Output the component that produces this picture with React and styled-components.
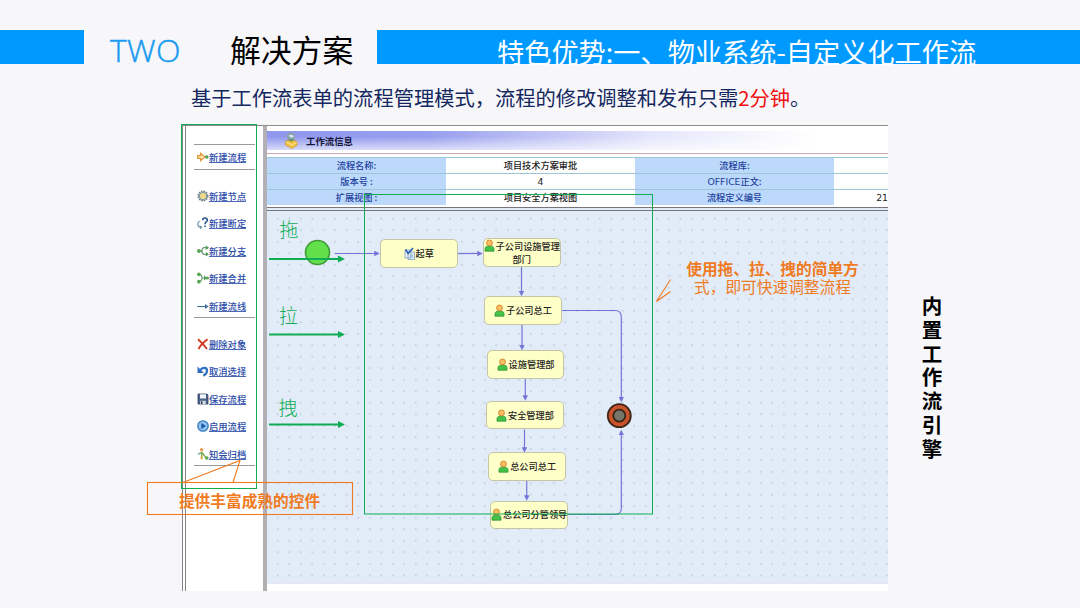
import React from "react";
import styled, { createGlobalStyle, css } from "styled-components";

const Global = createGlobalStyle`
  * { box-sizing: border-box; }
  body { margin: 0; background: #f7f7fa; font-family: "Noto Sans CJK SC", sans-serif; }
`;

const GREEN = "#0fae55";
const ORANGE = "#f07a1e";
const EDGE = "#7276d6";

const Slide = styled.main`
  position: relative;
  width: 1080px;
  height: 608px;
  overflow: hidden;
  background: #f7f7fa;
  display: flex;
  flex-direction: column;
`;

const Header = styled.header`
  display: flex;
  height: 34px;
  margin-top: 30px;
`;

const Bar = styled.div`
  width: ${(p) => p.$w}px;
  background: #0099ff;
  display: flex;
  align-items: center;
`;

const Titles = styled.div`
  width: 293px;
  display: flex;
  align-items: center;
  padding-left: 26px;
  line-height: 44px;
  white-space: nowrap;
`;

const Ordinal = styled.span`
  width: 120px;
  font: 300 32px/44px "Open Sans", sans-serif;
  letter-spacing: 0.3px;
  -webkit-text-stroke: 0.5px #1b9cf2;
  color: #1b9cf2;
  padding-top: 5px;
`;

const Title = styled.h1`
  margin: 0;
  padding-top: 4px;
  font-size: 30.8px;
  font-weight: 400;
  line-height: 44px;
  color: #000;
`;

const Feature = styled.h2`
  margin: 0 0 0 120px;
  padding-top: 8px;
  font-size: 27.2px;
  font-weight: 400;
  line-height: 40px;
  color: #fff;
  white-space: nowrap;
`;

const Lead = styled.p`
  margin: 17px 0 0 191px;
  font-size: 20.27px;
  font-weight: 400;
  line-height: 32px;
  height: 32px;
  color: #14285f;
  white-space: nowrap;
  em { font-style: normal; color: #f01010; }
`;

const Designer = styled.section`
  display: flex;
  width: 706px;
  height: 466px;
  margin: 12px 0 0 182px;
  border-top: 1px solid #8d8a8c;
`;

const Toolbar = styled.nav`
  width: 81px;
  padding: 18px 8px 0 8px;
  background: #fff;
  border-left: 4px double #858587;
`;

const Group = styled.div`
  display: flex;
  flex-direction: column;
  gap: 5.5px;
  padding-top: ${(p) => p.$top}px;
  border-bottom: 1px solid #9b9b9b;
  ${(p) => p.$first && css`border-top: 1px solid #9b9b9b; padding-bottom: 1px;`}
  width: 61px;
`;

const Tool = styled.a`
  display: flex;
  align-items: center;
  height: 22px;
  padding-left: 3px;
  font-size: 9.3px;
  font-weight: 500;
  line-height: 12px;
  color: #2b4ba8;
  white-space: nowrap;
  svg { width: 12px; height: 12px; flex: none; }
  span { border-bottom: 1px solid #4a66b4; height: 12px; }
`;

const Workspace = styled.div`
  flex: 1;
  display: flex;
  flex-direction: column;
  border-left: 4px solid #b3b0b3;
  background: #fff;
  min-width: 0;
`;

const InfoHead = styled.div`
  display: flex;
  align-items: center;
  height: 19px;
  margin-top: 5px;
  padding-left: 16px;
  gap: 6px;
  background: linear-gradient(to bottom, rgba(255,255,255,0) 30%, rgba(255,255,255,.65)),
    linear-gradient(to right, #8f98ee 0, #989fee 26%, #bfc3f5 44%, #e6e6fc 62%, #fff 88%);
  font-size: 9.4px;
  font-weight: 700;
  color: #14143a;
  svg { width: 17px; height: 17px; }
`;

const InfoTable = styled.div`
  display: grid;
  grid-template-columns: 179px 189px 199px 54px;
  grid-auto-rows: 16px;
  margin-top: 3px;
  padding-top: 3px;
  border-top: 1px solid #c9a9b4;
`;

const Cell = styled.div`
  display: flex;
  align-items: center;
  justify-content: ${(p) => (p.$end ? "flex-end" : "center")};
  border-top: 1px solid #9cc6d6;
  padding-bottom: 1px;
  background: ${(p) => (p.$label ? "#bcd9fc" : "#fff")};
  color: ${(p) => (p.$label ? "#1c3f9c" : "#222")};
  font-size: 9.2px;
  font-weight: 500;
  line-height: 13px;
  white-space: nowrap;
`;

const Latin = styled.span`
  font-family: "DejaVu Sans", sans-serif;
  font-size: 9.3px;
  font-weight: 400;
`;

const Canvas = styled.div`
  position: relative;
  height: 377px;
  margin-top: 2px;
  border-top: 4px double #77757a;
  border-bottom: 1px solid #e6e6ee;
  background-color: #e2ebf8;
  background-image: radial-gradient(circle, #c3cedc 0.6px, transparent 1px);
  background-size: 11.5px 11.5px;
  background-position: 5px 2px;
`;

const Wires = styled.svg`
  position: absolute;
  left: 0;
  top: 0;
  width: 621px;
  height: 372px;
`;

const Node = styled.div`
  position: absolute;
  left: ${(p) => p.$x - 267}px;
  top: ${(p) => p.$y - 211}px;
  width: 77.5px;
  height: 28.7px;
  display: flex;
  align-items: center;
  justify-content: center;
  text-align: center;
  border: 1px solid #c4c4a6;
  border-radius: 5px;
  background: #ffffc8;
  font-size: 9.2px;
  font-weight: 500;
  line-height: 13px;
  color: #222;
  white-space: nowrap;
  svg { width: 11px; height: 13px; flex: none; margin-right: 1px; vertical-align: -2px; }
`;

const Overlay = styled.svg`
  position: absolute;
  inset: 0;
  width: 1080px;
  height: 608px;
`;

const Gesture = styled.span`
  position: absolute;
  left: ${(p) => p.$x}px;
  top: ${(p) => p.$y}px;
  font-size: 19px;
  font-weight: 300;
  line-height: 24px;
  color: ${GREEN};
`;

const Callout = styled.div`
  position: absolute;
  left: ${(p) => p.$x}px;
  top: ${(p) => p.$y}px;
  width: ${(p) => p.$w}px;
  text-align: center;
  font-size: 15.7px;
  line-height: 18.4px;
  font-weight: 400;
  color: ${ORANGE};
  white-space: nowrap;
  strong { font-weight: 700; display: block; }
`;

const Engine = styled.aside`
  position: absolute;
  left: 920px;
  top: 296px;
  writing-mode: vertical-rl;
  font-size: 20.5px;
  font-weight: 700;
  line-height: 24px;
  letter-spacing: 3.3px;
  white-space: nowrap;
  color: #000;
`;

const Person = () => (
  <svg viewBox="0 0 11 13">
    <path d="M1 12.2V9.6C1 7.8 2.8 7 5.5 7S10 7.8 10 9.6v2.6z" fill="#45c348" stroke="#218b2c" strokeWidth=".7" />
    <circle cx="5.5" cy="3.9" r="2.9" fill="#f9bf62" stroke="#d3812a" strokeWidth=".9" />
  </svg>
);

const Draft = () => (
  <svg viewBox="0 0 11 13">
    <path d="M1 3h6v8H1zM4 5h6.5v7.5H4z" fill="#e8f1fb" stroke="#7da0c4" strokeWidth=".8" />
    <path d="M5.5 8h4M5.5 10h4" stroke="#7da0c4" strokeWidth=".7" />
    <path d="M1.5 2.500l2.600 4L9 1" fill="none" stroke="#2f62b5" strokeWidth="1.6" />
  </svg>
);

const InfoIcon = () => (
  <svg viewBox="0 0 17 17">
    <path d="M2.500 9.500l4.500-2 7 2v3.500l-5 3.500-6.500-3.500z" fill="#f2c244" stroke="#c8912b" strokeWidth=".7" />
    <path d="M3 10l6 3 5-3" fill="none" stroke="#fbe7a0" />
    <circle cx="8" cy="4.800" r="4" fill="#8aa3a6" />
    <path d="M5.5 3.4l3.5-1 2 2.3-3 1z" fill="#d5e6f3" />
    <path d="M5 7.5l3 2.5 3.5-2.5" fill="#678b58" />
  </svg>
);

const toolIcons = {
  flow: (
    <>
      <path d="M.7 4.6h3V2.4L7.8 6 3.7 9.6V7.4h-3z" fill="#fff0c5" stroke="#e09330" strokeWidth="1.200" />
      <circle cx="9.8" cy="6" r="1.8" fill="#4f9f4c" />
    </>
  ),
  node: (
    <>
      <circle cx="6" cy="6" r="4.600" fill="none" stroke="#6d7f85" strokeWidth="1.800" strokeDasharray="1.6 .8" />
      <circle cx="6" cy="6" r="3.7" fill="#f1d98a" stroke="#7b98a8" strokeWidth="1" />
    </>
  ),
  decide: (
    <>
      <path d="M3.2 4.2C1 4.5.5 6 .9 7.8c.3 1.7 1.4 2.4 3.5 2.5M3 8.9l1.6 1.4L3 11.6" fill="none" stroke="#6d8f9f" strokeWidth="1.100" />
      <path d="M5.6 3.2C5.8.3 10.6.4 10.3 3.3 10.1 4.9 8 5 8 7.2M8 8.6v1.5" fill="none" stroke="#27588e" strokeWidth="1.600" />
    </>
  ),
  branch: (
    <>
      <path d="M3 6h2M11 2.700H6.500L5 4.500v3l1.500 1.800H11" fill="none" stroke="#6c9a78" strokeWidth="1.300" />
      <circle cx="1.900" cy="6" r="1.900" fill="#58a653" />
      <path d="M8.800.4l3.200 2.300-3.200 2.300zM8.800 7l3.200 2.300-3.200 2.300z" fill="#4d9a52" />
    </>
  ),
  merge: (
    <>
      <path d="M2 2.5c2.3 0 3 1 3 3.5s-.7 3.5-3 3.5M5.500 6h5" fill="none" stroke="#6c9a78" strokeWidth="1.200" />
      <circle cx="1.900" cy="2.300" r="1.900" fill="#58a653" />
      <circle cx="1.900" cy="9.700" r="1.900" fill="#58a653" />
      <path d="M7 3.500L10 6 7 8.500z" fill="#4d9a52" />
      <circle cx="10.400" cy="6" r="1.600" fill="#58a653" />
    </>
  ),
  line: (
    <>
      <path d="M.3 6.500h9" stroke="#3f6f9f" strokeWidth="1.100" />
      <path d="M8 4l3.600 2.500L8 9z" fill="#3f6f9f" />
    </>
  ),
  remove: <path d="M1 1.300C4 4 7 7 10 11M10.500 1.300C7 4 3.500 7 1.500 11" fill="none" stroke="#d03a20" strokeWidth="1.900" />,
  undo: (
    <>
      <path d="M3 5.500C5.500 1.800 10 2.300 10 5.800c0 2-1.300 3.700-3.700 4.900" fill="none" stroke="#2e6fc4" strokeWidth="2.200" />
      <path d="M.5 1.500v6.500H7z" fill="#2e6fc4" />
    </>
  ),
  save: (
    <>
      <path d="M1 1h9l1 1v9H1z" fill="#4b6288" stroke="#33435f" strokeWidth=".8" />
      <path d="M3 1.300h6v4.200H3z" fill="#eef4fa" />
      <path d="M3.200 7.800h5.500V11H3.200z" fill="#d9dee6" />
      <path d="M4 8.300h1.500V11H4z" fill="#33435f" />
    </>
  ),
  play: (
    <>
      <circle cx="6" cy="6" r="5.200" fill="#8fc4f2" stroke="#3579c0" strokeWidth="1.300" />
      <path d="M4.300 2.900L9 6l-4.700 3.100z" fill="#1c57a8" />
    </>
  ),
  archive: (
    <>
      <path d="M1 6l4-1.500L10 11M5 4.500L4.500 10" fill="none" stroke="#79a94b" strokeWidth="1.400" />
      <circle cx="4.600" cy="1.800" r="1.700" fill="#ec9b4f" />
      <circle cx="4.700" cy="10" r="1.400" fill="#e9b34f" />
      <circle cx="9.900" cy="10" r="1.700" fill="#58a653" />
      <circle cx="1.500" cy="6" r="1" fill="#a9c9dd" />
    </>
  ),
};

const groups = [
  { first: true, top: 1, items: [["flow", "新建流程"]] },
  {
    top: 14.5,
    items: [
      ["node", "新建节点"],
      ["decide", "新建断定"],
      ["branch", "新建分支"],
      ["merge", "新建合并"],
      ["line", "新建流线"],
    ],
  },
  {
    top: 15,
    items: [
      ["remove", "删除对象"],
      ["undo", "取消选择"],
      ["save", "保存流程"],
      ["play", "启用流程"],
      ["archive", "知会归档"],
    ],
  },
];

const rows = [
  ["流程名称:", "项目技术方案审批", "流程库:", ""],
  ["版本号 :", <Latin key="v">4</Latin>, <span key="o"><Latin>OFFICE</Latin>正文:</span>, ""],
  ["扩展视图 :", "项目安全方案视图", "流程定义编号", <Latin key="n">21</Latin>],
];

const nodes = [
  [484.2, 296.3, "子公司总工"],
  [486.8, 350.3, "设施管理部"],
  [486.2, 400.8, "安全管理部"],
  [488.4, 452.4, "总公司总工"],
  [490.4, 500.6, "总公司分管领导"],
];

const wires = [
  "M335 253.500H377",
  "M458 253.500H480",
  "M521.500 267V293.500",
  "M522 325V347.500",
  "M525.300 379V398",
  "M524.500 429.500V450",
  "M526.700 481V498",
  "M561.500 310.500H615Q621.300 310.500 621.300 317V399.500",
  "M568 514.500H615Q621.300 514.500 621.300 508V432.500",
];

export default function App() {
  return (
    <>
      <Global />
      <Slide lang="zh-CN">
        <Header>
          <Bar $w={84} />
          <Titles>
            <Ordinal>TWO</Ordinal>
            <Title>解决方案</Title>
          </Titles>
          <Bar $w={703}>
            <Feature>特色优势:一、物业系统-自定义化工作流</Feature>
          </Bar>
        </Header>
        <Lead>
          基于工作流表单的流程管理模式，流程的修改调整和发布只需<em>2分钟</em>。
        </Lead>
        <Designer>
          <Toolbar>
            {groups.map((g, i) => (
              <Group key={i} $first={g.first} $top={g.top}>
                {g.items.map(([icon, label]) => (
                  <Tool key={icon}>
                    <svg viewBox="0 0 12 12">{toolIcons[icon]}</svg>
                    <span>{label}</span>
                  </Tool>
                ))}
              </Group>
            ))}
          </Toolbar>
          <Workspace>
            <InfoHead>
              <InfoIcon />
              工作流信息
            </InfoHead>
            <InfoTable>
              {rows.flatMap((r, i) =>
                r.map((t, j) => (
                  <Cell key={`${i}-${j}`} $label={j % 2 === 0} $end={j === 3}>
                    {t}
                  </Cell>
                ))
              )}
            </InfoTable>
            <Canvas>
              <Wires viewBox="267 211 621 372">
                <defs>
                  <marker id="tip" viewBox="0 0 5 5" refX="2.500" refY="2.500" markerWidth="5.500" markerHeight="5.500" markerUnits="userSpaceOnUse" orient="auto">
                    <path d="M0 0L5 2.500 0 5z" fill={EDGE} />
                  </marker>
                </defs>
                {wires.map((d) => (
                  <path key={d} d={d} fill="none" stroke={EDGE} strokeWidth="1.200" markerEnd="url(#tip)" />
                ))}
                <circle cx="317.500" cy="252.500" r="12" fill="#62e04c" stroke="#3e9a35" strokeWidth="1.600" />
                <circle cx="619.300" cy="415.700" r="11.500" fill="#c9532a" stroke="#3b2418" strokeWidth="1.800" />
                <circle cx="619.300" cy="415.700" r="6" fill="#77766a" stroke="#3b2418" strokeWidth="1.800" />
              </Wires>
              <Node $x={380} $y={239.2}>
                <Draft />
                起草
              </Node>
              <Node $x={483} $y={238.4}>
                <div>
                  <Person />
                  子公司设施管理
                  <br />
                  部门
                </div>
              </Node>
              {nodes.map(([x, y, t]) => (
                <Node key={t} $x={x} $y={y}>
                  <Person />
                  {t}
                </Node>
              ))}
            </Canvas>
          </Workspace>
        </Designer>

        <Overlay viewBox="0 0 1080 608" fill="none">
          <g stroke={GREEN} strokeWidth="1">
            <rect x="181.500" y="124.500" width="75" height="364" />
            <rect x="364.500" y="194.500" width="288" height="319.500" />
          </g>
          {[259, 334.5, 424.5].map((y) => (
            <g key={y}>
              <path d={`M269 ${y}H340`} stroke={GREEN} strokeWidth="2" />
              <path d={`M338 ${y - 3.5}L345 ${y}L338 ${y + 3.5}z`} fill={GREEN} />
            </g>
          ))}
          <g stroke={ORANGE} strokeWidth="1.100">
            <rect x="147.500" y="482.500" width="205" height="32" />
            <path d="M183 482.500L240 460.500L233 482.500" />
            <path d="M670.500 279.500L656.500 301.500L670.500 291.500" />
          </g>
        </Overlay>
        <Gesture $x={279.5} $y={217}>拖</Gesture>
        <Gesture $x={279} $y={303}>拉</Gesture>
        <Gesture $x={278.5} $y={395}>拽</Gesture>
        <Callout $x={147} $y={491.5} $w={205}>
          <strong>提供丰富成熟的控件</strong>
        </Callout>
        <Callout $x={672.5} $y={260} $w={200}>
          <strong>使用拖、拉、拽的简单方</strong>
          式，即可快速调整流程
        </Callout>
        <Engine>内置工作流引擎</Engine>
      </Slide>
    </>
  );
}
